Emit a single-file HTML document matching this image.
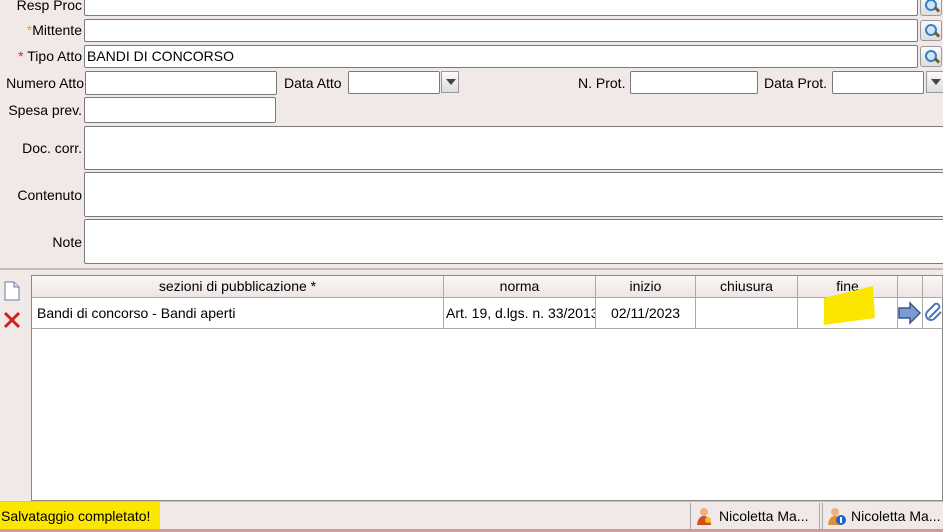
<!DOCTYPE html><html><head><style>
body{margin:0;width:943px;height:532px;overflow:hidden;background:#f1e9e7;font-family:"Liberation Sans",Tahoma,sans-serif;font-size:14px;color:#000;position:relative}
.a{position:absolute}
.in{position:absolute;background:#fff;border:1px solid #7a7a7a;border-radius:2px;box-sizing:border-box}
.lb{position:absolute;text-align:right;line-height:16px;white-space:nowrap}
.srch{position:absolute;width:22px;height:21px;border:1px solid #9a9a9a;border-radius:3px;background:linear-gradient(#fafafa,#ddd);box-sizing:border-box}
.srch:before{content:"";position:absolute;left:4px;top:3px;width:8px;height:8px;border:2px solid #3a7fc0;border-radius:50%;background:#cfe6fa}
.srch:after{content:"";position:absolute;left:13px;top:12px;width:6px;height:3px;background:#7a5a30;transform:rotate(45deg)}
.dd{position:absolute;width:18px;height:22px;border:1px solid #999;background:linear-gradient(#fafafa,#ddd);box-sizing:border-box}
.dd:after{content:"";position:absolute;left:4px;top:7px;border:5px solid transparent;border-top:6px solid #444}
.hd{position:absolute;top:276px;height:22px;line-height:20px;text-align:center;border-right:1px solid #aaa;background:linear-gradient(#fbf7f6,#ece4e2);box-sizing:border-box}
.cl{position:absolute;top:298px;height:30px;line-height:30px;border-right:1px solid #aaa;box-sizing:border-box;white-space:nowrap;overflow:hidden}
</style></head><body>
<div class="lb" style="right:861px;top:-3px">Resp Proc</div>
<div class="in" style="left:84px;top:-3px;width:834px;height:19px"></div>
<div class="srch" style="left:920px;top:-5px"></div>
<div class="lb" style="right:861px;top:22px"><span style="color:#f0a020">*</span>Mittente</div>
<div class="in" style="left:84px;top:19px;width:834px;height:23px"></div>
<div class="srch" style="left:920px;top:20px"></div>
<div class="lb" style="right:861px;top:48px"><span style="color:#e02020">*</span> Tipo Atto</div>
<div class="in" style="left:84px;top:45px;width:834px;height:23px;padding:1px 2px;line-height:18px">BANDI DI CONCORSO</div>
<div class="srch" style="left:920px;top:46px"></div>
<div class="lb" style="right:859px;top:75px">Numero Atto</div>
<div class="in" style="left:85px;top:71px;width:192px;height:24px"></div>
<div class="lb" style="left:284px;top:75px">Data Atto</div>
<div class="in" style="left:348px;top:71px;width:92px;height:23px"></div>
<div class="dd" style="left:441px;top:71px"></div>
<div class="lb" style="left:578px;top:75px">N. Prot.</div>
<div class="in" style="left:630px;top:71px;width:128px;height:23px"></div>
<div class="lb" style="left:764px;top:75px">Data Prot.</div>
<div class="in" style="left:832px;top:71px;width:92px;height:23px"></div>
<div class="dd" style="left:926px;top:71px"></div>
<div class="lb" style="right:861px;top:102px">Spesa prev.</div>
<div class="in" style="left:84px;top:97px;width:192px;height:26px"></div>
<div class="lb" style="right:861px;top:140px">Doc. corr.</div>
<div class="in" style="left:84px;top:126px;width:862px;height:44px"></div>
<div class="lb" style="right:861px;top:187px">Contenuto</div>
<div class="in" style="left:84px;top:172px;width:862px;height:45px"></div>
<div class="lb" style="right:861px;top:234px">Note</div>
<div class="in" style="left:84px;top:219px;width:862px;height:45px"></div>
<div class="a" style="left:0;top:268px;width:943px;height:2px;background:#c9bebc"></div>
<svg class="a" style="left:3px;top:281px" width="18" height="20"><path d="M2 1h9l5 5v13H2z" fill="#fff" stroke="#6a7aa0"/><path d="M11 1v5h5" fill="#dde" stroke="#6a7aa0"/></svg>
<svg class="a" style="left:2px;top:310px" width="20" height="20"><path d="M3 3L17 17M17 3L3 17" stroke="#d02020" stroke-width="3"/></svg>
<div class="a" style="left:31px;top:275px;width:912px;height:226px;background:#fff;border:1px solid #8a8a8a;box-sizing:border-box"></div>
<div class="hd" style="left:32px;width:412px">sezioni di pubblicazione *</div>
<div class="hd" style="left:444px;width:152px">norma</div>
<div class="hd" style="left:596px;width:100px">inizio</div>
<div class="hd" style="left:696px;width:102px">chiusura</div>
<div class="hd" style="left:798px;width:100px">fine</div>
<div class="hd" style="left:898px;width:25px"></div>
<div class="hd" style="left:923px;width:20px"></div>
<div class="a" style="left:32px;top:297px;width:911px;height:1px;background:#aaa"></div>
<div class="cl" style="left:32px;width:412px;padding-left:5px">Bandi di concorso - Bandi aperti</div>
<div class="cl" style="left:444px;width:152px;padding-left:2px">Art. 19, d.lgs. n. 33/2013</div>
<div class="cl" style="left:596px;width:100px;text-align:center">02/11/2023</div>
<div class="cl" style="left:696px;width:102px"></div>
<div class="cl" style="left:798px;width:100px"></div>
<div class="cl" style="left:898px;width:25px"></div>
<div class="a" style="left:32px;top:328px;width:911px;height:1px;background:#aaa"></div>
<svg class="a" style="left:823px;top:285px" width="53" height="42"><path d="M1 13L50 1L52 33L1 40z" fill="#fbe600"/></svg>
<svg class="a" style="left:897px;top:301px" width="26" height="24"><path d="M2 7h11V2l10 10-10 10v-5H2z" fill="#7d9bd0" stroke="#3a5590" stroke-width="1.5"/></svg>
<svg class="a" style="left:925px;top:302px" width="18" height="22"><path d="M4 16L14 6a3 3 0 0 0-4-4L2 10a5 5 0 0 0 7 7l7-7" fill="none" stroke="#4a78c0" stroke-width="2"/></svg>
<div class="a" style="left:0;top:501px;width:943px;height:1px;background:#c9bebc"></div>
<div class="a" style="left:0;top:502px;width:159px;height:28px;background:#fbe600;line-height:28px;padding-left:1px;white-space:nowrap">Salvataggio completato!</div>
<div class="a" style="left:690px;top:503px;width:130px;height:26px;border-left:1px solid #aaa;border-right:1px solid #aaa;line-height:27px;padding-left:28px;box-sizing:border-box;white-space:nowrap">Nicoletta Ma...</div>
<div class="a" style="left:822px;top:503px;width:121px;height:26px;border-left:1px solid #aaa;line-height:27px;padding-left:28px;box-sizing:border-box;white-space:nowrap">Nicoletta Ma...</div>
<svg class="a" style="left:695px;top:506px" width="20" height="20"><circle cx="9" cy="6" r="4" fill="#f0b080"/><path d="M2 19q1-9 7-9t7 9z" fill="#d05020"/><circle cx="13" cy="14" r="3" fill="#f0c020"/></svg>
<svg class="a" style="left:827px;top:506px" width="20" height="20"><circle cx="8" cy="6" r="4" fill="#f0b080"/><path d="M1 19q1-9 7-9t7 9z" fill="#e09030"/><circle cx="14" cy="14" r="5" fill="#2060d0"/><rect x="13" y="11" width="2" height="6" fill="#fff"/></svg>
<div class="a" style="left:0;top:529px;width:943px;height:3px;background:#d49a9a"></div>
</body></html>
